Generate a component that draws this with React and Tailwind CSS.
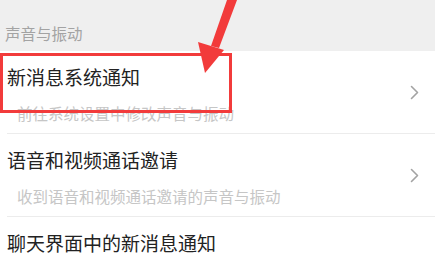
import React from "react";

const Chevron = ({ className = "" }) => (
  <svg width="9" height="15" viewBox="0 0 9 15" className={className}>
    <path d="M1.5 1.5 L7.5 7.5 L1.5 13.5" fill="none" stroke="#a3a3a3" strokeWidth="1.6" strokeLinecap="round" strokeLinejoin="round" />
  </svg>
);

const Row = ({ title, sub }) => (
  <div className="ml-[7px] h-[83px] border-b border-[#ececec] flex items-start justify-between">
    <div className="flex flex-col pt-[14px]">
      <div className="text-[19px] leading-[24px] text-[#222222]">{title}</div>
      {sub && (
        <div className="mt-[14px] pl-[10px] text-[15.5px] leading-[20px] text-[#c6c6c6]">{sub}</div>
      )}
    </div>
    <div className="self-center pr-[16px]">
      <Chevron />
    </div>
  </div>
);

export default function App() {
  return (
    <div
      className="relative w-[435px] h-[270px] overflow-hidden bg-white"
      style={{ fontFamily: '"Noto Sans CJK SC", "Noto Sans", sans-serif' }}
    >
      <div className="h-[51px] bg-[#efefef] pl-[5px] pt-[23px]">
        <div className="text-[15.5px] leading-[20px] text-[#a3a3a3]">声音与振动</div>
      </div>
      <div className="flex flex-col bg-white">
        <Row title="新消息系统通知" sub="前往系统设置中修改声音与振动" />
        <Row title="语音和视频通话邀请" sub="收到语音和视频通话邀请的声音与振动" />
        <div className="ml-[7px] h-[83px] flex items-start justify-between">
          <div className="pt-[14px] text-[19px] leading-[24px] text-[#222222]">聊天界面中的新消息通知</div>
        </div>
      </div>

      <div className="absolute left-0 top-[53px] w-[232px] h-[60px] border-[3px] border-[#f23b3b]" />

      <svg className="absolute left-0 top-0" width="435" height="270" viewBox="0 0 435 270">
        <polygon points="227,0 237,0 219,48 211,46" fill="#f23b3b" />
        <polygon points="198,42 224,50 205,73" fill="#f23b3b" />
      </svg>
    </div>
  );
}
